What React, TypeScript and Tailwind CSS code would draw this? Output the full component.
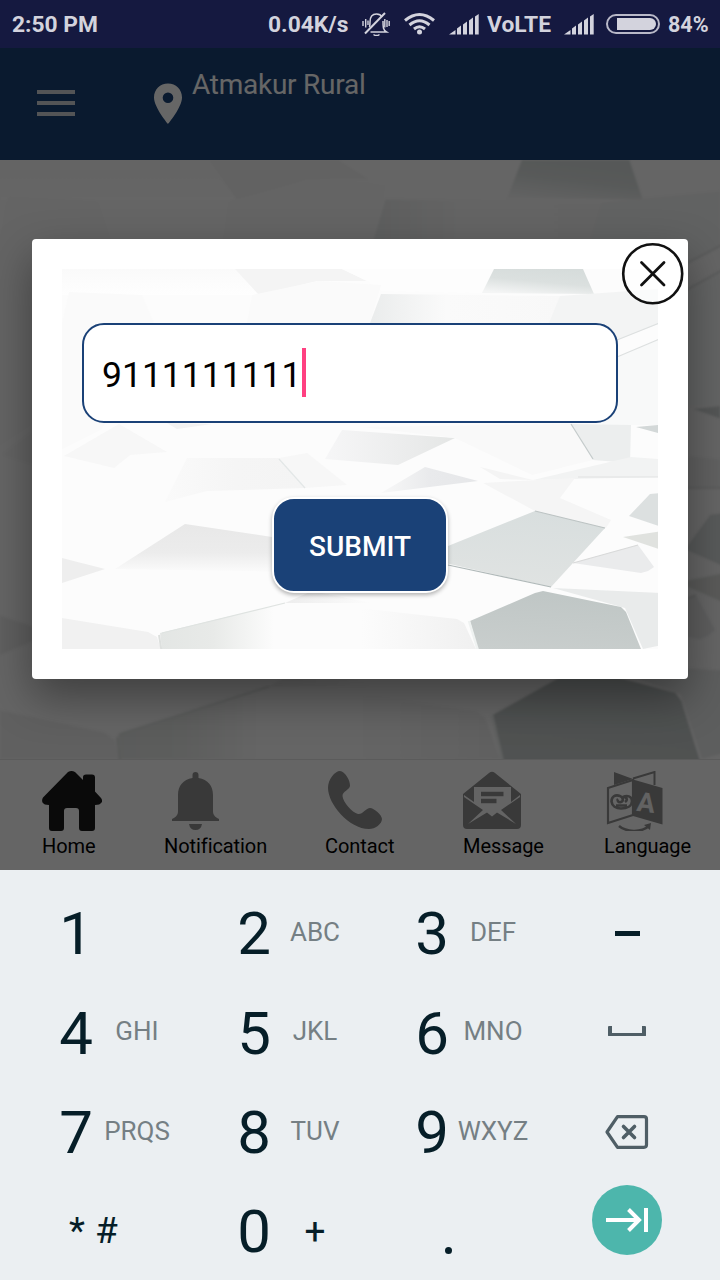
import React from "react";

type Facet = { p: string; f: string };

const facets: Facet[] = [
  { p: "0,0 173,0 197,26 0,26", f: "url(#fadeDown)" },
  { p: "173,0 280,0 305,12 255,12 197,26", f: "#f4f4f4" },
  { p: "280,0 436,0 420,24 319,22 305,12", f: "#fdfdfd" },
  { p: "7,23 80,26 92,54 40,160 0,180 0,54", f: "#fafafa" },
  { p: "190,26 257,12 319,16 308,54 185,54", f: "#fafafa" },
  { p: "432,0 521,0 532,25 420,24", f: "url(#topDark)" },
  { p: "319,25 498,27 489,54 308,54", f: "url(#panel)" },
  { p: "498,27 596,20 596,55 555,71 480,71", f: "#f3f4f4" },
  { p: "555,88 596,71 596,156 540,156", f: "#f8f9f9" },
  { p: "57,155 105,183 68,186 52,199 2,187", f: "#f7f7f7" },
  { p: "105,154 150,155 115,160", f: "#f2f2f2" },
  { p: "125,189 217,189 243,219 145,222 103,233", f: "url(#slab)" },
  { p: "217,189 245,184 285,216 243,219", f: "#f7f7f7" },
  { p: "123,255 210,268 240,273 240,303 53,300", f: "url(#ridge)" },
  { p: "0,289 43,300 0,314", f: "#eeeeee" },
  { p: "0,349 86,363 95,368 99,380 0,380", f: "#f1f1f1" },
  { p: "98,364 223,334 250,380 100,380", f: "url(#lowLeft)" },
  { p: "223,334 250,322 310,334", f: "url(#sliver)" },
  { p: "296,339 395,350 402,354 414,380 250,380", f: "url(#lowMid)" },
  { p: "280,161 393,169 336,196 263,190", f: "url(#wedge)" },
  { p: "300,158 509,155 531,191 470,206 393,169", f: "#f9f9f9" },
  { p: "363,198 416,212 319,224", f: "url(#small)" },
  { p: "509,155 569,156 568,194 531,191", f: "#eceeee" },
  { p: "574,158 596,156 596,164", f: "#d3d8d8" },
  { p: "569,188 596,190 596,208 471,211", f: "#f2f3f3" },
  { p: "418,198 471,211 438,210", f: "#f4f4f4" },
  { p: "421,214 513,209 498,229 549,251 544,259 473,242", f: "#f5f5f5" },
  { p: "588,225 600,224 600,258 567,247", f: "#dce0e0" },
  { p: "561,268 600,262 600,281", f: "#e0e2df" },
  { p: "473,242 543,259 489,318 370,291 386,277", f: "url(#big)" },
  { p: "511,294 576,276 592,298 586,302 579,304", f: "#eaebec" },
  { p: "491,319 600,324 600,376 581,380 563,339", f: "#e9ebeb" },
  { p: "408,352 473,324 481,322 559,338 564,343 581,385 417,385", f: "url(#hex)" },
];

function Texture({ className }: { className: string }) {
  return (
    <svg className={className} viewBox="0 0 596 380" preserveAspectRatio="none">
      <defs>
        <filter id="soft" x="0" y="0" width="1" height="1">
          <feGaussianBlur stdDeviation="0.7" />
        </filter>
        <linearGradient id="fadeDown" x1="0" y1="0" x2="0" y2="1">
          <stop offset="0" stopColor="#fafafa" />
          <stop offset="1" stopColor="#fefefe" />
        </linearGradient>
        <linearGradient id="topDark" x1="0.7" y1="0" x2="0.3" y2="1">
          <stop offset="0" stopColor="#d6dcdb" />
          <stop offset="0.5" stopColor="#dbe0df" />
          <stop offset="1" stopColor="#f4f5f5" />
        </linearGradient>
        <linearGradient id="panel">
          <stop offset="0" stopColor="#eaecec" />
          <stop offset="0.4" stopColor="#fafafa" />
          <stop offset="1" stopColor="#f8f8f8" />
        </linearGradient>
        <linearGradient id="slab">
          <stop offset="0" stopColor="#fafafa" />
          <stop offset="0.5" stopColor="#f5f5f5" />
          <stop offset="1" stopColor="#f4f4f4" />
        </linearGradient>
        <linearGradient id="sliver">
          <stop offset="0" stopColor="#ededed" />
          <stop offset="1" stopColor="#fcfcfc" />
        </linearGradient>
        <linearGradient id="ridge" x1="0" y1="0" x2="0" y2="1">
          <stop offset="0" stopColor="#e8e8e8" />
          <stop offset="0.6" stopColor="#ececec" />
          <stop offset="1" stopColor="#fbfbfb" />
        </linearGradient>
        <linearGradient id="lowLeft">
          <stop offset="0" stopColor="#e3e6e4" />
          <stop offset="0.35" stopColor="#e8eae8" />
          <stop offset="0.75" stopColor="#fcfcfc" />
        </linearGradient>
        <linearGradient id="lowMid">
          <stop offset="0.3" stopColor="#fcfcfc" />
          <stop offset="1" stopColor="#f0f0f0" />
        </linearGradient>
        <linearGradient id="wedge">
          <stop offset="0" stopColor="#f6f6f7" />
          <stop offset="0.7" stopColor="#eaebeb" />
          <stop offset="1" stopColor="#e4e6e5" />
        </linearGradient>
        <linearGradient id="small">
          <stop offset="0" stopColor="#f8f8f8" />
          <stop offset="0.5" stopColor="#e9eaec" />
          <stop offset="1" stopColor="#e6e7e9" />
        </linearGradient>
        <linearGradient id="big" x1="0.7" y1="0" x2="0.5" y2="1">
          <stop offset="0" stopColor="#d8dede" />
          <stop offset="1" stopColor="#e0e3e2" />
        </linearGradient>
        <linearGradient id="hex" x1="0.6" y1="0" x2="0.4" y2="1">
          <stop offset="0" stopColor="#bfc6c5" />
          <stop offset="1" stopColor="#c9cecd" />
        </linearGradient>
      </defs>
      <rect width="596" height="380" fill="#fcfcfc" />
      <g filter="url(#soft)">
        <rect x="-6" y="-6" width="608" height="392" fill="#fcfcfc" />
        {facets.map((s, i) => (
          <polygon key={i} points={s.p} fill={s.f} />
        ))}
        <g fill="none" strokeWidth="1.200">
          <path d="M555 71L600 53M555 88L600 69" stroke="#dde0e0" />
          <path d="M509 155L531 190" stroke="#c4cbcb" />
          <path d="M217 190L243 219" stroke="#e3e7e7" />
          <path d="M516 208H600" stroke="#dfe1e1" />
          <path d="M473 242L543 259" stroke="#bcc3c3" />
          <path d="M386 296L489 318" stroke="#b0b9b9" />
          <path d="M511 294L576 276" stroke="#d8d9d9" />
          <path d="M100 364L223 334" stroke="#dfe3e1" />
        </g>
        <path d="M407 352L417 385" stroke="#eff2f1" strokeWidth="2.500" />
        <path d="M97 366L100 385" stroke="#dde0de" strokeWidth="2" />
      </g>
    </svg>
  );
}

function Signal({ className }: { className: string }) {
  return (
    <svg className={className} viewBox="0 0 30 21" fill="#d3d3dd">
      <path d="M0 20.500L6.500 16V20.500ZM8 14.500L12 11.500V20.500H8ZM14 10.500L18 7.500V20.500H14ZM20 6.500L24 3.500V20.500H20ZM26 2.500L29.700 0V20.500H26Z" />
    </svg>
  );
}

function StatusBar() {
  return (
    <div className="flex h-12 shrink-0 items-center bg-[#151940] pl-3 text-[22.8px] font-bold leading-none text-[#d3d3dd]">
      <span className="w-[256px] whitespace-nowrap pt-[3px]">2:50 PM</span>
      <span className="w-[94px] whitespace-nowrap pt-[3px]">0.04K/s</span>
      <svg className="h-6 w-7 shrink-0" viewBox="0 0 28 24" fill="none" stroke="#d3d3dd" strokeWidth="1.500">
        <path d="M7.500 15C8 13 8 12 8 10C8 4 11 2 14.500 2C17 2 19 3 20 5M21 9C21 15 21 18 24.500 20H8.500M11.500 22.500C13.500 24 15.500 24 17.500 22.500" />
        <path d="M3 21.500L23 1" strokeWidth="2" />
        <path d="M1 9V14M3.700 7V15.500M6 8.500V13M22.800 7V15.500M25 8V15M27.200 9V14" strokeWidth="1.400" />
      </svg>
      <svg className="ml-3.5 h-6 w-[31px] shrink-0" viewBox="0 0 31 24" fill="none" stroke="#d3d3dd" strokeWidth="3">
        <path d="M1 8.500Q15.500-3.500 30 8.500M5.500 13Q15.500 4.500 25.500 13M10 17Q15.500 12.500 21 17" />
        <circle cx="15.500" cy="20" r="2.500" fill="#d3d3dd" stroke="none" />
      </svg>
      <Signal className="ml-[14px] h-[21px] w-[30px] shrink-0" />
      <span className="ml-2 w-[69px] whitespace-nowrap pt-[3px]">VoLTE</span>
      <Signal className="ml-[8px] h-[21px] w-[30px] shrink-0" />
      <div className="ml-3 flex h-5 w-[54px] shrink-0 items-center rounded-full border-2 border-[#b9b9c8] pl-[9px]">
        <div className="h-3 w-[39px] rounded-r-full bg-[#d3d3dd]" />
      </div>
      <span className="ml-2 whitespace-nowrap pt-[2px] text-[21.5px]">84%</span>
    </div>
  );
}

function Header() {
  return (
    <header className="flex h-28 shrink-0 bg-[#1a4177] text-white">
      <div className="ml-[37px] mt-[42px] flex h-[26px] w-[38px] flex-col justify-between">
        <div className="h-1 bg-[#d0d2d8]" />
        <div className="h-1 bg-[#d0d2d8]" />
        <div className="h-1 bg-[#d0d2d8]" />
      </div>
      <svg className="ml-[78px] mt-[35px] h-[41px] w-[30px]" viewBox="0 0 30 41" fill="#fff" fillRule="evenodd">
        <path d="M15 0.500C7 0.500 1 6.500 1 14.500C1 24.500 15 41 15 41C15 41 29 24.500 29 14.500C29 6.500 23 0.500 15 0.500ZM15 9.500A5.300 5.300 0 1 1 15 20.100A5.300 5.300 0 1 1 15 9.500Z" />
      </svg>
      <span className="ml-[9px] mt-[21px] text-[28px] leading-8 tracking-[-0.25px]">Atmakur Rural</span>
    </header>
  );
}

const HomeIcon = () => (
  <svg className="size-[60px]" viewBox="0 0 60 60" fill="#1a1a1a">
    <path d="M26 1Q29.500-1 33 1L41 9V6Q41 3.500 44 3.500H50Q53 3.500 53 6.500V20.500L59 27Q61 30 59.500 31.500Q58 34 53 34V57Q53 60 50 60H40Q37 60 37 57V40Q37 37 34 37H25Q22 37 22 40V57Q22 60 19 60H10Q7 60 7 57V34Q2 34 0.500 31.500Q-0.500 29 1 26.500Z" />
  </svg>
);
const BellIcon = () => (
  <svg className="h-[60px] w-12" viewBox="0 0 48 60" fill="#8f8f8f">
    <path d="M20.500 7V4Q20.500 1 23.500 1Q26.500 1 26.500 4V7C36 8.500 41 15 41 24V40C41 44 43 46 47 48V50H0V48C4 46 6 44 6 40V24C6 15 11 8.500 20.500 7ZM17 53H30Q29 59 23.500 59Q18 59 17 53Z" />
  </svg>
);
const PhoneIcon = () => (
  <svg className="h-[60px] w-14" viewBox="0 0 56 60" fill="#8f8f8f">
    <path d="M12 0C17 0 22.500 10 22 15C21.500 19 14.500 20 14.500 25C15 31 24 41.500 30 43C34 44 38 37 42 37C46 37 54 44 54 48C54 53 47 58 41 58C21 58 0 33 0 17C0 8 7 0 12 0Z" />
  </svg>
);
const MailIcon = () => (
  <svg className="h-[60px] w-[58px]" viewBox="0 0 58 60">
    <path d="M0 23L26 2Q29-0.500 32 2L58 23V54Q58 58 54 58H4Q0 58 0 54Z" fill="#8f8f8f" />
    <path d="M11 16H48V31L57 24V26L38 39L53 53L34 41.500L29 45.500L24 41.500L5 53L20 39L1 26V24L11 31Z" fill="#fbfbfb" />
    <path d="M18 23H40.500M18 30H33.500" stroke="#8f8f8f" strokeWidth="4.500" />
  </svg>
);
const LanguageIcon = () => (
  <svg className="h-[60px] w-[58px]" viewBox="0 0 58 60" fill="none" stroke="#8f8f8f" strokeWidth="2">
    <path d="M8 1L27 8L8 14Z" fill="#8f8f8f" stroke="none" />
    <path d="M27 7.500L48.500 1V14" />
    <path d="M2 17L27 9V44L2 52Z" strokeWidth="2.200" />
    <path d="M27 8.500L56.500 17V53.500L27 45Z" fill="#8f8f8f" stroke="none" />
    <path d="M14 25C9 23 5.500 26 5.500 30.500C6 35 10 37.500 15 37.500C21 37.500 26 35 26 30C26 25 21 24 17 26M14 25C17 26 18 30 15 31C12 32 11 29 12 28M10 34.500H21M17 26C21 26 22 29 19 31" strokeWidth="2.600" />
    <path d="M13 55C20 61 35 62 43 55" strokeWidth="2.500" />
    <path d="M38 54L45 52L44 59Z" fill="#8f8f8f" stroke="none" />
    <text x="40" y="41" transform="rotate(7 40 32)" fontSize="27" fontWeight="700" textAnchor="middle" fill="#f4f4f4" stroke="none" fontFamily="Roboto, sans-serif">A</text>
  </svg>
);

const navItems = [
  { label: "Home", icon: <HomeIcon />, width: "w-[122px]", inset: "" },
  { label: "Notification", icon: <BellIcon />, width: "w-[161px]", inset: "pl-2" },
  { label: "Contact", icon: <PhoneIcon />, width: "w-[138px]", inset: "pl-[3px]" },
  { label: "Message", icon: <MailIcon />, width: "w-[141px]", inset: "" },
  { label: "Language", icon: <LanguageIcon />, width: "w-[100px]", inset: "pl-[2px]" },
];

function BottomNav() {
  return (
    <nav className="flex h-[111px] shrink-0 border-t border-[#e4e4e4] bg-[#fdfdfd] pl-[42px] pt-[11px]">
      {navItems.map((n) => (
        <div key={n.label} className={"flex shrink-0 flex-col " + n.width}>
          <div className={n.inset}>{n.icon}</div>
          <span className="mt-[3px] text-[20px] leading-6 tracking-[-0.08px] text-black">{n.label}</span>
        </div>
      ))}
    </nav>
  );
}

function Modal() {
  return (
    <div className="absolute left-8 top-[239px] h-[440px] w-[656px] rounded bg-white p-[30px] shadow-[0_18px_44px_rgba(0,0,0,0.38)]">
      <div className="relative h-[380px] w-[596px]">
        <Texture className="absolute inset-0 size-full" />
        <div className="relative flex flex-col pl-5 pt-[54px]">
          <div className="flex h-[100px] w-[536px] items-center rounded-[22px] border-2 border-[#1a4177] bg-white pl-[18px]">
            <span className="pt-[5px] text-[35.500px] leading-none text-black">9111111111</span>
            <span className="mt-[-1px] h-[49px] w-1 bg-[#ff4081]" />
          </div>
          <button className="ml-[190px] mt-[74px] h-24 w-44 rounded-[22px] border-2 border-white bg-[#1a4177] pt-1 text-[28px] font-medium text-white shadow-[0_2px_4px_rgba(0,0,0,0.3)]">
            SUBMIT
          </button>
        </div>
      </div>
      <svg className="absolute right-[3px] top-[3px] size-16" viewBox="0 0 64 64" fill="none" stroke="#111" strokeWidth="2.600" strokeLinecap="round">
        <circle cx="31.700" cy="31.700" r="29.500" fill="#fff" fillOpacity="0.6" />
        <path d="M20.500 20.500L43 43M43 20.500L20.500 43" strokeWidth="2.800" />
      </svg>
    </div>
  );
}

function Key({ digit, letters }: { digit: string; letters: string }) {
  return (
    <div className="flex items-center pt-[3px]">
      <span className="flex w-9 justify-center text-[60px] leading-none">{digit}</span>
      <span className="w-[86px] pb-[5px] text-center text-[26px] leading-none text-[#757f84]">{letters}</span>
    </div>
  );
}

function Keypad() {
  return (
    <div className="grid h-[410px] shrink-0 grid-cols-[178px_178px_178px_70px] grid-rows-[99px_100px_99px_99px] bg-[#ebeff2] pl-[58px] pt-[13px] text-[#061e28]">
      <Key digit="1" letters="" />
      <Key digit="2" letters="ABC" />
      <Key digit="3" letters="DEF" />
      <div className="flex items-center justify-center pt-[2px]">
        <div className="h-[5px] w-[25px] bg-[#061e28]" />
      </div>
      <Key digit="4" letters="GHI" />
      <Key digit="5" letters="JKL" />
      <Key digit="6" letters="MNO" />
      <div className="flex items-center justify-center pb-[3px]">
        <div className="h-[10px] w-[38px] rounded-[1px] border-x-4 border-b-[3px] border-[#4f5e66]" />
      </div>
      <Key digit="7" letters="PRQS" />
      <Key digit="8" letters="TUV" />
      <Key digit="9" letters="WXYZ" />
      <div className="flex items-center justify-center">
        <svg className="h-[34px] w-11" viewBox="0 0 44 34" fill="none" stroke="#4f5e66" strokeWidth="3.200" strokeLinejoin="round">
          <path d="M12.500 1.700H39Q41.500 1.700 41.500 4.200V29.800Q41.500 32.300 39 32.300H12.500L2 17Z" />
          <path d="M18.500 11.500L29.500 22.500M29.500 11.500L18.500 22.500" strokeWidth="3.600" strokeLinecap="round" />
        </svg>
      </div>
      <div className="flex items-center pl-[11px] text-[37px] leading-none">
        <span className="w-[26px]">*</span>
        <span>#</span>
      </div>
      <div className="flex items-center pt-[2px]">
        <span className="flex w-9 justify-center text-[60px] leading-none">0</span>
        <span className="w-[86px] text-center text-[37px] leading-none">+</span>
      </div>
      <div className="flex items-end pb-[26px] pl-[31px]">
        <div className="size-[7px] rounded-full bg-[#061e28]" />
      </div>
      <div className="flex items-start pt-1">
        <div className="flex size-[70px] items-center justify-center rounded-full bg-[#4db6ac]">
          <svg className="h-6 w-[42px]" viewBox="0 0 42 24" fill="none" stroke="#fff" strokeWidth="4">
            <path d="M0 12H34M22.500 1.500L33 12L22.500 22.500M40 0V24" />
          </svg>
        </div>
      </div>
    </div>
  );
}

export default function App() {
  return (
    <div className="relative flex h-[1280px] w-[720px] flex-col overflow-hidden font-[Roboto,sans-serif]">
      <StatusBar />
      <div className="relative flex h-[822px] shrink-0 flex-col overflow-hidden">
        <Header />
        <Texture className="block h-[599px] w-[720px] shrink-0" />
        <BottomNav />
        <div className="absolute inset-0 bg-black/60" />
      </div>
      <Keypad />
      <Modal />
    </div>
  );
}
